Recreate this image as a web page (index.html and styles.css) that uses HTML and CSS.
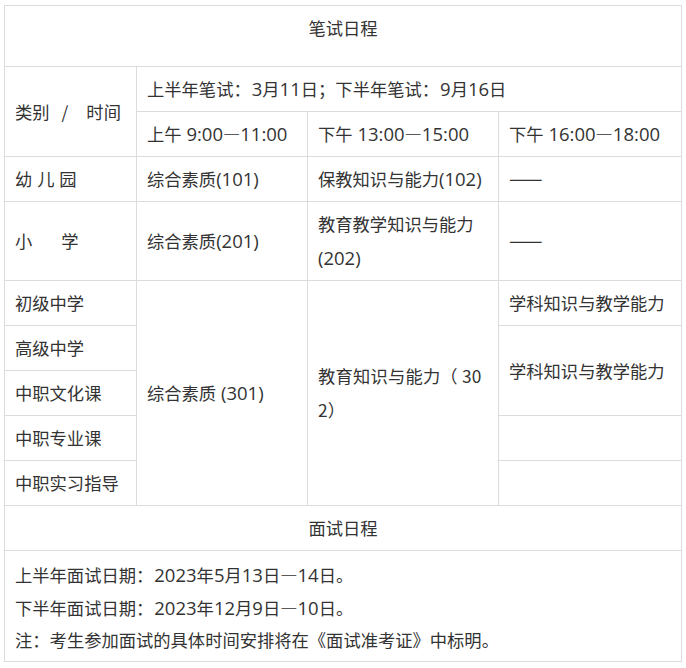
FILE: index.html
```html
<!DOCTYPE html>
<html lang="zh-CN">
<head>
<meta charset="utf-8">
<title>笔试日程</title>
<link rel="stylesheet" href="styles.css">
</head>
<body>
<table class="schedule">
  <colgroup>
    <col class="c1"><col class="c2"><col class="c3"><col class="c4">
  </colgroup>
  <tbody>
    <tr><td colspan="4" class="title">笔试日程</td></tr>
    <tr>
      <td rowspan="2">类别<span class="sep">/</span>时间</td>
      <td colspan="3">上半年笔试<span class="punc">：</span><span class="n">3</span>月<span class="n">11</span>日<span class="punc">；</span>下半年笔试<span class="punc">：</span><span class="n">9</span>月<span class="n">16</span>日</td>
    </tr>
    <tr>
      <td>上午<span class="n"> 9:00</span><span class="dash">—</span><span class="n">11:00</span></td>
      <td>下午<span class="n"> 13:00</span><span class="dash">—</span><span class="n">15:00</span></td>
      <td>下午<span class="n"> 16:00</span><span class="dash">—</span><span class="n">18:00</span></td>
    </tr>
    <tr>
      <td><span class="spread">幼 儿 园</span></td>
      <td>综合素质<span class="n">(101)</span></td>
      <td>保教知识与能力<span class="n">(102)</span></td>
      <td><span class="dash long">——</span></td>
    </tr>
    <tr>
      <td>小<span class="gap"></span>学</td>
      <td>综合素质<span class="n">(201)</span></td>
      <td>教育教学知识与能力<span class="n">(202)</span></td>
      <td><span class="dash long">——</span></td>
    </tr>
    <tr>
      <td>初级中学</td>
      <td rowspan="5">综合素质<span class="n"> (301)</span></td>
      <td rowspan="5" class="wrap">教育知识与能力（ 302）</td>
      <td>学科知识与教学能力</td>
    </tr>
    <tr>
      <td>高级中学</td>
      <td rowspan="2">学科知识与教学能力</td>
    </tr>
    <tr>
      <td>中职文化课</td>
    </tr>
    <tr>
      <td>中职专业课</td>
      <td></td>
    </tr>
    <tr>
      <td>中职实习指导</td>
      <td></td>
    </tr>
    <tr><td colspan="4" class="center">面试日程</td></tr>
    <tr>
      <td colspan="4" class="notes">
        <p>上半年面试日期<span class="punc">：</span><span class="n">2023</span>年<span class="n">5</span>月<span class="n">13</span>日<span class="dash">—</span><span class="n">14</span>日。</p>
        <p>下半年面试日期<span class="punc">：</span><span class="n">2023</span>年<span class="n">12</span>月<span class="n">9</span>日<span class="dash">—</span><span class="n">10</span>日。</p>
        <p>注<span class="punc">：</span>考生参加面试的具体时间安排将在《面试准考证》中标明。</p>
      </td>
    </tr>
  </tbody>
</table>
</body>
</html>
```

FILE: styles.css
```css
html, body {
  margin: 0;
  padding: 0;
  background: #fff;
}

body {
  font-family: "Noto Sans CJK SC", sans-serif;
  font-size: 17.3px;
  color: #333;
}

.schedule {
  margin: 5px 0 0 4px;
  width: 677px;
  border-collapse: collapse;
  table-layout: fixed;
}

.c1 { width: 132px; }
.c2 { width: 171px; }
.c3 { width: 191px; }
.c4 { width: 183px; }

.schedule td {
  border: 1px solid #dcdcdc;
  padding: 5px 10px;
  line-height: 34px;
  vertical-align: middle;
  text-align: left;
  white-space: normal;
}

.schedule td.title {
  text-align: center;
  padding-bottom: 21px;
}

.schedule td.center {
  text-align: center;
}

.schedule td.wrap {
  word-break: break-all;
  letter-spacing: 0.2px;
}

.n {
  font-family: "Open Sans", "Noto Sans CJK SC", sans-serif;
  font-size: 18.5px;
  line-height: 1;
}

.punc,
.dash {
  line-height: 1;
}

.punc {
  font-family: "Noto Sans CJK JP", "Noto Sans CJK SC", sans-serif;
}

.punc + .n {
  margin-left: 1px;
}

.dash.long {
  font-size: 20px;
}

.sep {
  display: inline-block;
  line-height: 1;
  margin: 0 18px 0 12px;
}

.spread {
  word-spacing: 1px;
}

.gap {
  display: inline-block;
  width: 29px;
}

.schedule td.notes {
  padding: 8px 10px 4px;
}

.notes p {
  margin: 0;
  line-height: 32.5px;
}
```
